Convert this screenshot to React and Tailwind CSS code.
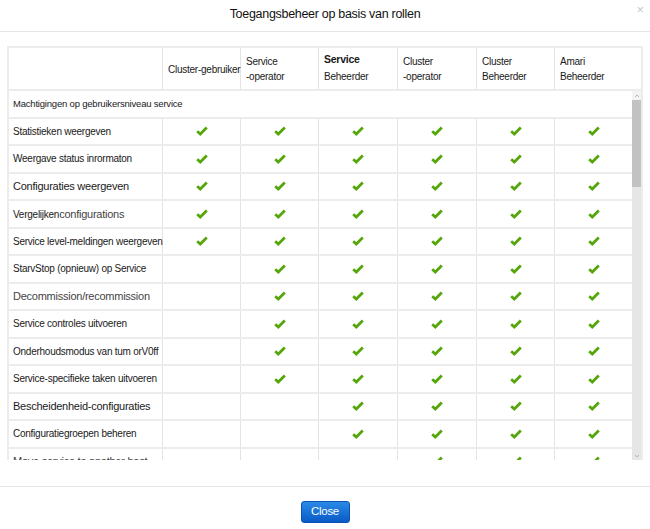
import React from 'react';

const columns = [
  { lines: ['Cluster-gebruiker'] },
  { lines: ['Service', '-operator'] },
  { lines: ['Service', 'Beheerder'], bold: true },
  { lines: ['Cluster', '-operator'] },
  { lines: ['Cluster', 'Beheerder'] },
  { lines: ['Amari', 'Beheerder'] },
];

const colWidths = ['w-[78px]', 'w-[78px]', 'w-[79px]', 'w-[79px]', 'w-[78px]'];

// from = first role column that has a check
const rows = [
  { label: 'Statistieken weergeven', from: 0 },
  { label: 'Weergave status inrormaton', from: 0 },
  { label: 'Configuraties weergeven', from: 0, big: true },
  { label: 'Vergelijken', extra: 'configurations', from: 0 },
  { label: 'Service level-meldingen weergeven', from: 0 },
  { label: 'StarvStop (opnieuw) op Service', from: 1 },
  { label: 'Decommission/recommission', from: 1, big: true, gray: true },
  { label: 'Service controles uitvoeren', from: 1 },
  { label: 'Onderhoudsmodus van tum orV0ff', from: 1 },
  { label: 'Service-specifieke taken uitvoeren', from: 1 },
  { label: 'Bescheidenheid-configuraties', from: 2, big: true },
  { label: 'Configuratiegroepen beheren', from: 2 },
  { label: 'Move service to another host', from: 3, big: true, gray: true },
];

const Check = () => (
  <svg width="12" height="10" viewBox="0 0 12 10">
    <path d="M1.2 5.2 L4.3 8 L10.8 1.6" fill="none" stroke="#55a60a" strokeWidth="2.8" strokeLinejoin="miter" />
  </svg>
);

const Row = ({ row }) => (
  <div className="flex h-[27.5px] shrink-0 border-b-2 border-[#ececec]">
    <div className="w-[154px] shrink-0 border-r border-[#e3e3e3] flex items-center pl-[4px]">
      <span className={`${row.big ? 'text-[11px]' : 'text-[10px]'} ${row.gray ? 'text-[#444]' : 'text-[#1a1a1a]'} whitespace-nowrap tracking-[-0.25px]`}>
        {row.label}
        {row.extra && <span className="text-[11px] text-[#444]">{row.extra}</span>}
      </span>
    </div>
    {[0, 1, 2, 3, 4, 5].map(i => (
      <div
        key={i}
        className={`${i < 5 ? colWidths[i] + ' border-r border-[#e3e3e3]' : 'flex-1'} shrink-0 flex items-center justify-center`}
      >
        {i >= row.from && <Check />}
      </div>
    ))}
  </div>
);

export default function App() {
  return (
    <div className="w-[650px] h-[529px] bg-white flex flex-col font-['Liberation_Sans',Arial,sans-serif] text-[#222]">
      {/* Header */}
      <div className="relative h-[32px] shrink-0 border-b border-[#e5e5e5] flex items-center justify-center">
        <h1 className="text-[12.5px] text-[#111] tracking-[-0.3px] -mt-[3px]">Toegangsbeheer op basis van rollen</h1>
        <span className="absolute right-[6px] top-[0px] text-[13px] text-[#c8c8c8]">×</span>
      </div>

      {/* Body */}
      <div className="h-[454px] shrink-0 pt-[14px] px-[7px] pb-[26px] flex flex-col">
        <div className="flex-1 flex flex-col border-l-2 border-t-2 border-r-2 border-[#ececec] overflow-hidden">
          {/* Column headers */}
          <div className="flex h-[43px] shrink-0 border-b-2 border-[#ececec]">
            <div className="w-[154px] shrink-0 border-r border-[#e3e3e3]" />
            {columns.map((col, i) => (
              <div
                key={i}
                className={`${i < 5 ? colWidths[i] + ' border-r border-[#e3e3e3]' : 'flex-1'} shrink-0 pl-[5px] pt-[1px] flex flex-col justify-center text-[10px] leading-[15px] text-[#1a1a1a] tracking-[-0.25px] whitespace-nowrap`}
              >
                {col.lines.map((l, j) => (
                  <span key={j} className={col.bold && j === 0 ? 'font-bold text-[10.5px] -mt-[3px] mb-[2px]' : ''}>
                    {l}
                  </span>
                ))}
              </div>
            ))}
          </div>

          {/* Scrolling body */}
          <div className="flex-1 flex overflow-hidden">
            <div className="flex-1 flex flex-col overflow-hidden">
              <div className="h-[27.5px] shrink-0 border-b-2 border-[#ececec] flex items-center pl-[4px] text-[9.5px] text-[#1a1a1a] tracking-[-0.2px]">
                Machtigingen op gebruikersniveau service
              </div>
              {rows.map((row, i) => (
                <Row key={i} row={row} />
              ))}
            </div>
            {/* Scrollbar */}
            <div className="w-[9px] shrink-0 bg-[#e6e6e6] flex flex-col">
              <div className="h-[9px] flex items-center justify-center bg-[#f3f3f3]">
                <svg width="6" height="4" viewBox="0 0 6 4">
                  <path d="M1 3 L3 1 L5 3" fill="none" stroke="#a8a8a8" strokeWidth="0.8" />
                </svg>
              </div>
              <div className="h-[87px] bg-[#c2c2c2]" />
              <div className="flex-1" />
              <div className="h-[9px] flex items-center justify-center">
                <svg width="6" height="4" viewBox="0 0 6 4">
                  <path d="M1 1 L3 3 L5 1" fill="none" stroke="#a8a8a8" strokeWidth="0.8" />
                </svg>
              </div>
            </div>
          </div>
        </div>
      </div>

      {/* Footer */}
      <div className="flex-1 border-t border-[#e5e5e5] flex justify-center pt-[14px]">
        <button className="w-[49px] h-[22px] rounded-[3px] border border-[#0a52b5] bg-gradient-to-b from-[#2a8ae6] to-[#0a5ac6] text-white text-[11.5px] tracking-[-0.3px]">
          Close
        </button>
      </div>
    </div>
  );
}
